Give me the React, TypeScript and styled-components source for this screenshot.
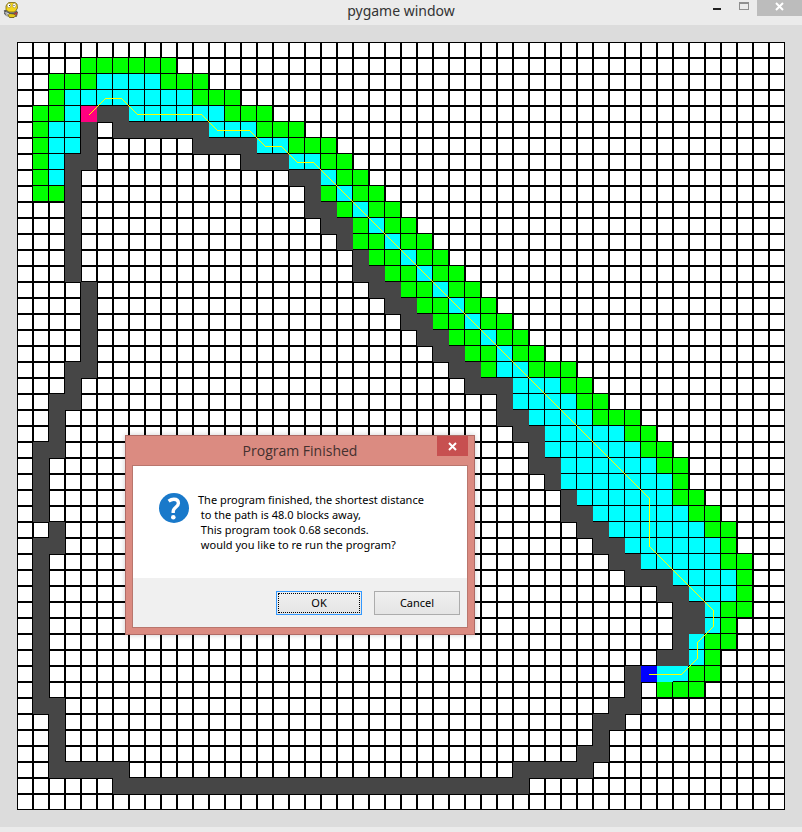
import React from "react";
import styled, { createGlobalStyle } from "styled-components";

const GlobalStyle = createGlobalStyle`
  *, *::before, *::after { box-sizing: border-box; }
  body {
    margin: 0;
    background: #ebebeb;
    font-family: "Noto Sans", "Open Sans", sans-serif;
  }
`;

const AppWindow = styled.main`
  position: relative;
  display: flex;
  flex-direction: column;
  padding-bottom: 5px;
  background: #ebebeb;
`;

const TitleBar = styled.header`
  display: grid;
  grid-template-columns: 1fr auto 1fr;
  align-items: start;
  height: 25px;
`;

const AppIcon = styled.svg`
  display: block;
  width: 16px;
  height: 16px;
  margin: 2px 0 0 3px;
`;

const WindowTitle = styled.h1`
  margin: 0;
  font-size: 14px;
  line-height: 22px;
  font-weight: 400;
  color: #333;
`;

const WindowControls = styled.div`
  display: flex;
  justify-content: flex-end;
`;

const ControlButton = styled.button<{ $close?: boolean }>`
  display: flex;
  justify-content: center;
  width: ${(p) => (p.$close ? 45 : 27)}px;
  height: 16px;
  padding: 0;
  border: 0;
  background: ${(p) => (p.$close ? "#bcbcbc" : "transparent")};

  svg { display: block; }
`;

const ClientArea = styled.section`
  padding: 17px;
  background: #dcdcdc;
`;

const Board = styled.svg`
  display: block;
  width: 100%;
  height: auto;
`;

const Dialog = styled.section`
  position: absolute;
  top: 435px;
  left: 125px;
  display: flex;
  flex-direction: column;
  width: 350px;
  height: 200px;
  padding: 0 6px 6px;
  border: 1px solid #af6b65;
  background: #db8b81;
  box-shadow: 0 0 5px rgba(0, 0, 0, 0.2);
`;

const DialogHeader = styled.div`
  display: grid;
  grid-template-columns: 31px 1fr 31px;
  align-items: start;
  height: 29px;
`;

const DialogTitle = styled.h2`
  margin: 0;
  font-family: "Open Sans", "Noto Sans", sans-serif;
  font-size: 14px;
  line-height: 30px;
  font-weight: 400;
  text-align: center;
  color: #43302e;
`;

const DialogClose = styled.button`
  display: flex;
  align-items: center;
  justify-content: center;
  width: 31px;
  height: 20px;
  padding: 0;
  border: 0;
  background: #c75050;
`;

const DialogPanel = styled.div`
  display: flex;
  flex: 1;
  flex-direction: column;
  border: 1px solid #b9766d;
  background: #fff;
`;

const DialogBody = styled.div`
  display: flex;
  flex: 1;
  align-items: flex-start;
  gap: 9px;
  padding: 26px 16px 0 26px;
`;

const QuestionIcon = styled.svg`
  flex: none;
  width: 30px;
  height: 30px;
  margin-top: 1px;
`;

const Message = styled.p`
  margin: 0;
  font-size: 11px;
  line-height: 15px;
  white-space: pre;
  color: #000;
`;

const DialogFooter = styled.footer`
  display: flex;
  justify-content: flex-end;
  gap: 12px;
  height: 49px;
  padding: 13px 7px 0;
  background: #f0f0f0;
`;

const PushButton = styled.button<{ $primary?: boolean }>`
  width: 86px;
  height: 24px;
  padding: 0 0 2px;
  border: 1px solid ${(p) => (p.$primary ? "#3399ff" : "#acacac")};
  outline: ${(p) => (p.$primary ? "1px dotted #000" : "none")};
  outline-offset: -3px;
  background: linear-gradient(#f0f0f0, #e5e5e5);
  font-family: inherit;
  font-size: 11px;
  line-height: 15px;
  color: #000;
`;

const CELL = 16;
const SIZE = 48;

type Kind = "w" | "g" | "c" | "f" | "s" | "e";

/* w wall, g frontier, c visited, f visited without grid line, s start, e end */
const COLORS: Record<Kind, string> = {
  w: "#464646",
  g: "#00ff00",
  c: "#00ffff",
  f: "#00ffff",
  s: "#0000ff",
  e: "#ff007f",
};

const ROWS = [
  "",
  "g4-9",
  "g2-4 c5-8 g9-11",
  "g2 c3-10 g11-13",
  "g1-2 c3 e4 w5-6 c7-12 g13-15",
  "g1 c2-3 w4 w6-11 c12-14 g15-17",
  "g1 c2-3 w4 w11-14 c15-16 g17-19",
  "g1 c2 w3-4 w14-16 c17-18 g19-20",
  "g1 c2 w3 w17-18 c19 g20-21",
  "g1-2 w3 w18 g19 c20 g21-22",
  "w3 w18-19 g20 c21 g22-23",
  "w3 w19-20 g21 c22 g23-24",
  "w3 w20 g21-22 c23 g24-25",
  "w3 w21 g22-23 c24 g25-26",
  "w3 w21-22 g23-24 c25 g26-27",
  "w4 w22-23 g24-25 c26 g27-28",
  "w4 w23-24 g25-26 c27 g28-29",
  "w4 w24-25 g26-27 c28 g29-30",
  "w4 w25-26 g27-28 c29 g30-31",
  "w4 w26-27 g28-29 c30 g31-32",
  "w3-4 w27-28 g29 c30-31 g32-34",
  "w3 w28-30 c31-33 g34-35",
  "w2-3 w30 c31-34 g35-36",
  "w2 w30-31 c32-35 g36-38",
  "w2 w31-32 c33-37 g38-39",
  "w1-2 w32 c33-38 g39-40",
  "w1 w32-33 c34-39 g40-41",
  "w1 w33 c34-40 g41",
  "w1 w34 c35-40 g41-42",
  "w1 w34-35 c36-41 g42-43",
  "w2 w35-36 c37-42 g43-44",
  "w1-2 w36-37 c38-43 g44",
  "w1 w37-38 c39-43 g44-45",
  "w1 w38-40 c41-44 g45",
  "w1 w40-41 c42-44 g45",
  "w1 w41-42 c43 g44-45",
  "w1 w41-42 c43 g44",
  "w1 w41 c42 g43-44",
  "w1 w40-41 c42 g43",
  "w1 w38 s39 f40 c41 g42-43",
  "w1 w38 g40-42",
  "w1-2 w37-38",
  "w2 w36-37",
  "w2 w36",
  "w2 w35-36",
  "w2-6 w31-35",
  "w6-31",
  "",
];

const ROUTE = [
  [4, 4], [5, 3], [6, 3], [7, 4], [11, 4], [12, 5], [14, 5], [15, 6],
  [16, 6], [17, 7], [18, 7], [39, 28], [39, 31], [43, 35], [43, 36],
  [42, 37], [42, 38], [41, 39], [39, 39],
];

function parseRow(row: string): (Kind | null)[] {
  const cells: (Kind | null)[] = Array(SIZE).fill(null);
  for (const run of row.split(" ").filter(Boolean)) {
    const [from, to = from] = run.slice(1).split("-").map(Number);
    cells.fill(run[0] as Kind, from, to + 1);
  }
  return cells;
}

function Cell({ kind, col, row }: { kind: Kind | null; col: number; row: number }) {
  const x = col * CELL;
  const y = row * CELL;
  if (!kind) {
    return <rect x={x + 1} y={y + 1} width={CELL - 2} height={CELL - 2} fill="#fff" />;
  }
  const side = kind === "g" || kind === "c" ? CELL - 1 : CELL;
  return <rect x={x} y={y} width={side} height={side} fill={COLORS[kind]} />;
}

function PathBoard() {
  const points = ROUTE.map(([c, r]) => `${c * CELL + 8.5},${r * CELL + 8.5}`).join(" ");
  return (
    <Board
      viewBox={`0 0 ${SIZE * CELL} ${SIZE * CELL}`}
      shapeRendering="crispEdges"
      role="img"
      aria-label="Path finding grid"
    >
      <rect width={SIZE * CELL} height={SIZE * CELL} fill="#000" />
      {ROWS.map((row, r) =>
        parseRow(row).map((kind, c) => <Cell key={`${r}-${c}`} kind={kind} col={c} row={r} />)
      )}
      <polyline points={points} fill="none" stroke="#ffff00" strokeWidth="1" strokeLinecap="square" />
    </Board>
  );
}

function SnakeIcon() {
  return (
    <AppIcon viewBox="0 0 16 16" aria-hidden="true">
      <path d="M2 8.5 L1.5 12 L4 14 L8 13 L13.5 14.5 L14.5 10 L12 8 Z" fill="#8d9296" stroke="#4b4b45" strokeWidth="0.8" />
      <path d="M4.5 1.5 L6 .5 H12 L14 2 L14.5 6 L13 8.5 L11.5 10 H5.5 L3 7.5 L3 4 Z" fill="#f3d51c" stroke="#766510" strokeWidth="0.8" />
      <path d="M4.5 12.5 L7 11.5 L11 12 L13 13.5 L11 15.5 H6.5 Z" fill="#e6c81b" stroke="#5d5010" strokeWidth="0.8" />
      <path d="M1 8.5 L3 10 L5 10 L7 11.5 H11 L14 9.5" stroke="#55585a" strokeWidth="1.2" fill="none" />
      <path d="M2.5 10.5 L6 12 M3 13 L5 13" stroke="#ddd" strokeWidth="1" />
      <path d="M11 12 L13.5 11 V13" stroke="#b33b35" strokeWidth="1.2" fill="none" />
      <ellipse cx="6" cy="3.5" rx="1.8" ry="2.3" fill="#fff" stroke="#8e7b20" strokeWidth="0.5" />
      <ellipse cx="11.3" cy="3.5" rx="1.8" ry="2.3" fill="#fff" stroke="#8e7b20" strokeWidth="0.5" />
      <path d="M6 3h1v1H6z M10.5 3h1v1h-1z" fill="#333" />
    </AppIcon>
  );
}

function CrossIcon() {
  return (
    <svg width="9" height="13" viewBox="0 0 9 13" aria-hidden="true">
      <path d="M1 3 L8 10 M8 3 L1 10" stroke="#fff" strokeWidth="2" fill="none" />
    </svg>
  );
}

const MESSAGE = `The program finished, the shortest distance
 to the path is 48.0 blocks away,
 This program took 0.68 seconds.
 would you like to re run the program?`;

export default function App() {
  return (
    <>
      <GlobalStyle />
      <AppWindow>
        <TitleBar>
          <SnakeIcon />
          <WindowTitle>pygame window</WindowTitle>
          <WindowControls>
            <ControlButton aria-label="Minimize">
              <svg width="8" height="16" shapeRendering="crispEdges" aria-hidden="true">
                <rect y="8" width="8" height="2" fill="#222" />
              </svg>
            </ControlButton>
            <ControlButton aria-label="Maximize">
              <svg width="10" height="16" shapeRendering="crispEdges" aria-hidden="true">
                <path d="M0 2h10v8H0z M1 4v5h8V4z" fill="#8f8f8f" fillRule="evenodd" />
              </svg>
            </ControlButton>
            <ControlButton $close aria-label="Close">
              <CrossIcon />
            </ControlButton>
          </WindowControls>
        </TitleBar>
        <ClientArea>
          <PathBoard />
        </ClientArea>
        <Dialog role="dialog" aria-labelledby="dialog-title" aria-describedby="dialog-message">
          <DialogHeader>
            <span />
            <DialogTitle id="dialog-title">Program Finished</DialogTitle>
            <DialogClose aria-label="Close dialog">
              <CrossIcon />
            </DialogClose>
          </DialogHeader>
          <DialogPanel>
            <DialogBody>
              <QuestionIcon viewBox="0 0 30 30" aria-hidden="true">
                <circle cx="15" cy="15" r="15" fill="#1979ca" />
                <path
                  d="M9.6 8.2 C11.4 6.9 13 6.3 14.8 6.3 C17.9 6.3 19.4 8 19.4 10.2 C19.4 14.2 14.2 14.4 14.2 18.4 V20"
                  fill="none"
                  stroke="#fff"
                  strokeWidth="3.4"
                />
                <circle cx="14.3" cy="24.2" r="2.3" fill="#fff" />
              </QuestionIcon>
              <Message id="dialog-message">{MESSAGE}</Message>
            </DialogBody>
            <DialogFooter>
              <PushButton $primary>OK</PushButton>
              <PushButton>Cancel</PushButton>
            </DialogFooter>
          </DialogPanel>
        </Dialog>
      </AppWindow>
    </>
  );
}
